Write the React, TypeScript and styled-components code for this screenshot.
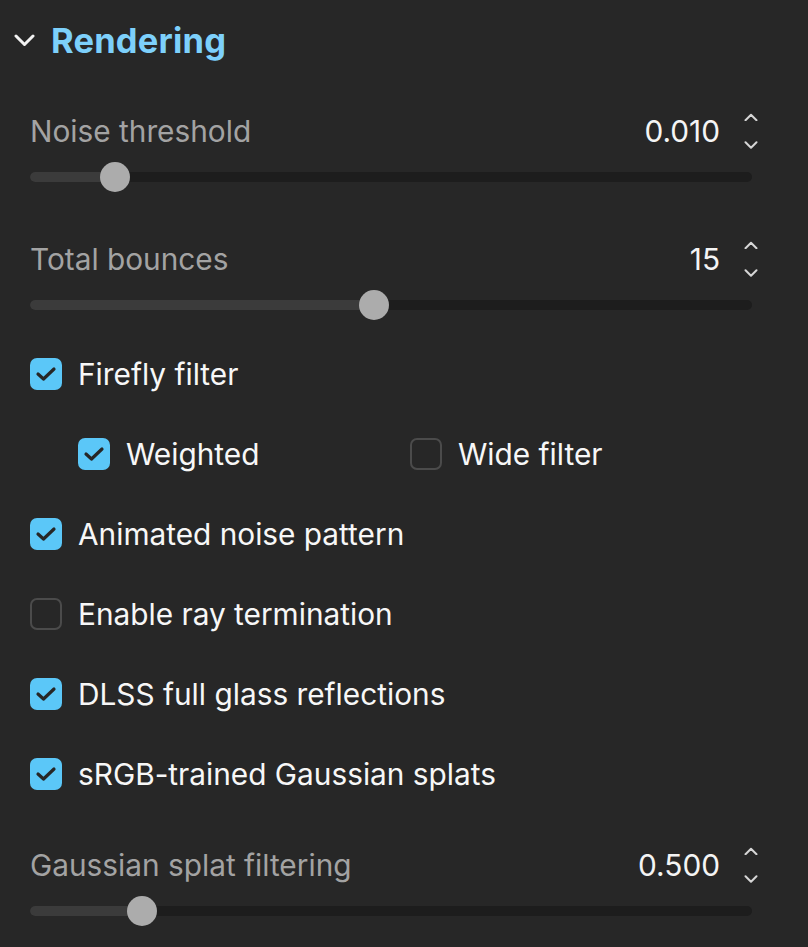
import React from 'react'
import styled, { createGlobalStyle } from 'styled-components'

const GlobalStyle = createGlobalStyle`
  html, body {
    margin: 0;
    padding: 0;
    background: #272727;
  }
  body {
    font-family: Inter, "Noto Sans", "Liberation Sans", sans-serif;
    -webkit-font-smoothing: antialiased;
  }
`

const Panel = styled.div`
  width: 808px;
  height: 947px;
  background: #272727;
  overflow: hidden;
  box-sizing: border-box;
`

const Header = styled.div`
  height: 80px;
  display: flex;
  align-items: center;
  gap: 16px;
  padding-left: 14px;
`

const Title = styled.h2`
  margin: 0;
  font-size: 34.5px;
  font-weight: 700;
  color: #7dd0fb;
  letter-spacing: 0.2px;
`

const Body = styled.div`
  display: flex;
  flex-direction: column;
  padding: 0 56px 0 30px;
`

const Field = styled.div<{ $top: number }>`
  margin-top: ${p => p.$top}px;
  display: flex;
  flex-direction: column;
  gap: 21px;
`

const FieldRow = styled.div`
  height: 40px;
  display: flex;
  align-items: center;
  justify-content: space-between;
`

const Label = styled.span`
  font-size: 29.8px;
  color: #a3a3a3;
`

const ValueBox = styled.div`
  display: flex;
  align-items: center;
  gap: 21px;
  margin-right: -5px;
`

const Value = styled.span`
  font-size: 29.8px;
  color: #f4f4f4;
  margin-right: 2px;
`

const Stepper = styled.div`
  display: flex;
  flex-direction: column;
  gap: 20px;
  width: 14px;
  align-items: center;
  transform: translateX(1px);
`

const Track = styled.div`
  position: relative;
  height: 10px;
  border-radius: 5px;
  background: #1d1d1d;
`

const Fill = styled.div`
  height: 100%;
  border-radius: 5px 0 0 5px;
  background: #3b3b3b;
`

const Thumb = styled.div`
  position: absolute;
  top: 50%;
  width: 30px;
  height: 30px;
  border-radius: 50%;
  background: #acacac;
  transform: translate(-50%, -50%);
`

const Checks = styled.div<{ $top: number }>`
  margin-top: ${p => p.$top}px;
  display: flex;
  flex-direction: column;
`

const CheckRow = styled.div`
  height: 80px;
  display: flex;
  align-items: center;
`

const SubRow = styled.div`
  height: 80px;
  display: grid;
  grid-template-columns: 332px auto;
  align-items: center;
  padding-left: 48px;
`

const CheckItem = styled.label`
  display: flex;
  align-items: center;
  gap: 16px;
  font-size: 29.8px;
  color: #f7f7f7;
`

const Box = styled.span<{ $on: boolean }>`
  width: 32px;
  height: 32px;
  box-sizing: border-box;
  border-radius: 7px;
  display: flex;
  align-items: center;
  justify-content: center;
  background: ${p => (p.$on ? '#5bc7f8' : 'transparent')};
  border: ${p => (p.$on ? 'none' : '2px solid #4b4b4b')};
`

const Chevron = ({ up, size = 14 }: { up?: boolean; size?: number }) => (
  <svg width={size} height={size * 0.6} viewBox="0 0 14 8" fill="none">
    <path
      d={up ? 'M1.5 7 L7 1.5 L12.5 7' : 'M1.5 1 L7 6.5 L12.5 1'}
      stroke="#d6d6d6"
      strokeWidth="2"
      strokeLinecap="round"
      strokeLinejoin="round"
    />
  </svg>
)

const Check = ({ label, on }: { label: string; on: boolean }) => (
  <CheckItem>
    <Box $on={on}>
      {on && (
        <svg width="22" height="16" viewBox="0 0 22 16" fill="none">
          <path d="M3 8 L8.5 13 L19 3" stroke="#262626" strokeWidth="3.2" strokeLinecap="round" strokeLinejoin="round" />
        </svg>
      )}
    </Box>
    {label}
  </CheckItem>
)

const Slider = ({ label, value, pct, top }: { label: string; value: string; pct: number; top: number }) => {
  // thumb centre travels between the track ends, inset by its radius
  const pos = `calc(15px + (100% - 30px) * ${pct})`
  return (
    <Field $top={top}>
      <FieldRow>
        <Label>{label}</Label>
        <ValueBox>
          <Value>{value}</Value>
          <Stepper>
            <Chevron up />
            <Chevron />
          </Stepper>
        </ValueBox>
      </FieldRow>
      <Track>
        <Fill style={{ width: pos }} />
        <Thumb style={{ left: pos }} />
      </Track>
    </Field>
  )
}

export default function App() {
  return (
    <Panel>
      <GlobalStyle />
      <Header>
        <svg width="21" height="13" viewBox="0 0 21 13" fill="none">
          <path d="M2 2 L10.5 10.5 L19 2" stroke="#f2f2f2" strokeWidth="3" strokeLinecap="round" strokeLinejoin="round" />
        </svg>
        <Title>Rendering</Title>
      </Header>
      <Body>
        <Slider label="Noise threshold" value="0.010" pct={0.101} top={31} />
        <Slider label="Total bounces" value="15" pct={0.475} top={57} />
        <Checks $top={24}>
          <CheckRow>
            <Check label="Firefly filter" on />
          </CheckRow>
          <SubRow>
            <Check label="Weighted" on />
            <Check label="Wide filter" on={false} />
          </SubRow>
          <CheckRow>
            <Check label="Animated noise pattern" on />
          </CheckRow>
          <CheckRow>
            <Check label="Enable ray termination" on={false} />
          </CheckRow>
          <CheckRow>
            <Check label="DLSS full glass reflections" on />
          </CheckRow>
          <CheckRow>
            <Check label="sRGB-trained Gaussian splats" on />
          </CheckRow>
        </Checks>
        <Slider label="Gaussian splat filtering" value="0.500" pct={0.14} top={31} />
      </Body>
    </Panel>
  )
}
